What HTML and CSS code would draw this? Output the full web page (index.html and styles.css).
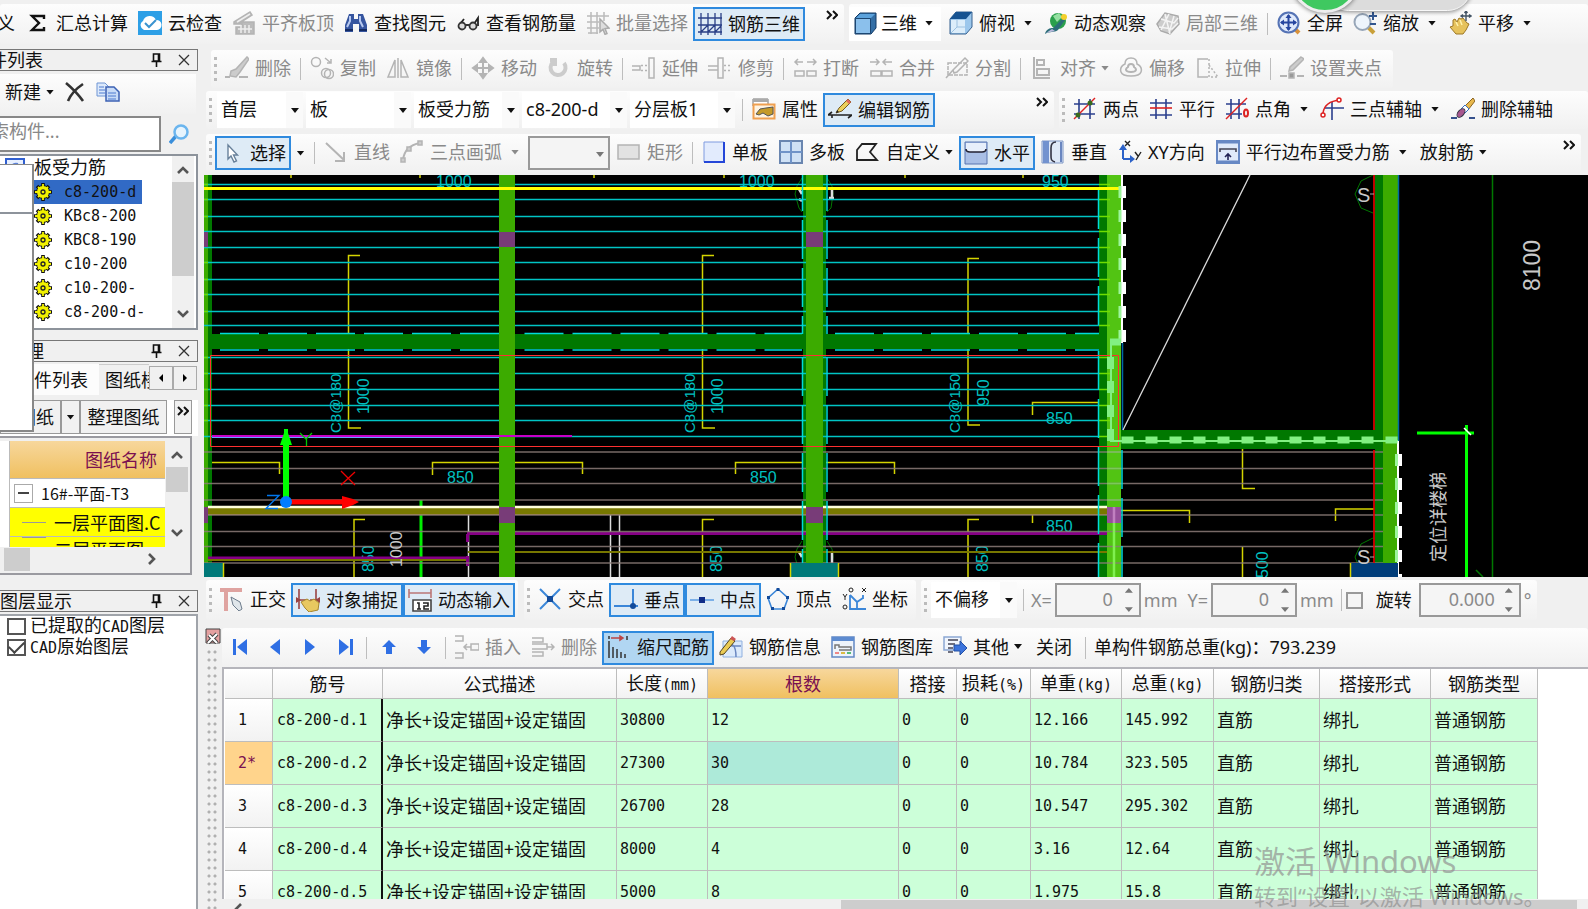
FILE: index.html
```html
<!DOCTYPE html>
<html lang="zh-CN">
<head>
<meta charset="utf-8">
<title>钢筋编辑</title>
<link rel="stylesheet" href="styles.css">
</head>
<body>
<svg class="defs" aria-hidden="true">
  <symbol id="more" viewBox="0 0 12 10"><path d="M1 1l4 4-4 4M7 1l4 4-4 4" fill="none" stroke="#111" stroke-width="2"/></symbol>
  <symbol id="pin" viewBox="0 0 10 14"><path d="M2 1h6v7H2zM0 8.500h10M5 9v5M7 1v7" fill="none" stroke="#111" stroke-width="1.600"/></symbol>
  <symbol id="x" viewBox="0 0 12 12"><path d="M1 1l10 10M11 1L1 11" stroke="#333" stroke-width="1.300"/></symbol>
  <symbol id="up" viewBox="0 0 12 8"><path d="M1 7l5-5 5 5" fill="none" stroke="#555" stroke-width="2.600"/></symbol>
  <symbol id="down" viewBox="0 0 12 8"><path d="M1 1l5 5 5-5" fill="none" stroke="#555" stroke-width="2.600"/></symbol>
  <symbol id="gear" viewBox="0 0 18 18"><path d="M9 0v18M0 9h18M3 3l12 12M15 3L3 15" stroke="#111" stroke-width="3.600"/><circle cx="9" cy="9" r="6.500" fill="#f2f200" stroke="#111"/><path d="M9 1v16M1 9h16M4 4l10 10M14 4L4 14" stroke="#f2f200" stroke-width="1.800"/><circle cx="9" cy="9" r="2" fill="#f2f200" stroke="#222" stroke-width="1.300"/></symbol>
</svg>
<div class="app">
<header class="barrow barrow-top">
  <div class="bar bar-main">
    <button class="tool tool-cut">义</button>
    <button class="tool"><svg class="ico" viewBox="0 0 24 24"><path d="M18 8V5H6l7 7-7 7h12v-3" fill="none" stroke="#111" stroke-width="2.4"/></svg>汇总计算</button>
    <button class="tool"><svg class="ico" viewBox="0 0 24 24"><path d="M0 0h24v24H0z" fill="#2d9fe6"/><path d="M6 19a5 5 0 0 1-1-9 7 7 0 0 1 13-1 5 5 0 0 1 1 10z" fill="#fff"/><path d="M7 12l4 4 7-7" fill="none" stroke="#3a93cf" stroke-width="2"/></svg>云检查</button>
    <button class="tool" disabled><svg class="ico" viewBox="0 0 24 24"><path d="M2 11L18 1l2 3-11 7h13v12H4v-7h6v-3H2z" fill="#bbb"/><path d="M5 11L18 3M6 18h14M9 14v8m4-8v8m4-8v8" stroke="#eee" fill="none"/></svg>平齐板顶</button>
    <button class="tool"><svg class="ico" viewBox="0 0 24 24"><path d="M5 3h5v5h4V3h5l4 11v7h-8v-8H9v8H1v-7z" fill="#36559f"/><path d="M6 5v5l-3 6m13-11v5l3 6" stroke="#b7c9f0" stroke-width="2" fill="none"/><path d="M1 19h8m6 0h8" stroke="#132a63" stroke-width="2"/></svg>查找图元</button>
    <button class="tool"><svg class="ico" viewBox="0 0 24 24"><path d="M4 13l4-5m10 5l4-6v8" stroke="#222" stroke-width="1.800" fill="none"/><circle cx="6" cy="15" r="3.500" fill="#ddd" stroke="#333" stroke-width="1.800"/><circle cx="17" cy="15" r="3.500" fill="#ddd" stroke="#333" stroke-width="1.800"/><path d="M9 14h5" stroke="#333" stroke-width="2"/></svg>查看钢筋量</button>
    <button class="tool" disabled><svg class="ico" viewBox="0 0 24 24"><path d="M5 1v22M11 1v22M18 1v9M1 5h22M1 11h12M1 17h12M2 22h10" stroke="#bbb" stroke-width="1.5"/><path d="M14 8l9 9-4 .5 2 5-2 .8-2-5-3 2.500z" fill="#ddd" stroke="#aaa"/></svg>批量选择</button>
    <button class="tool on"><svg class="ico" viewBox="0 0 24 24"><path d="M3 1v22M10 1v22M17 1v22M0 6h24M0 13h24M0 20h24M3 20L10 13M10 20l7-7M17 20l6-6M23 1v22" stroke="#2a3f86" stroke-width="1.3"/></svg>钢筋三维</button>
    <button class="more" aria-label="更多"><svg><use href="#more"/></svg></button>
  </div>
  <div class="bar bar-view">
    <button class="tool viewcombo"><svg class="ico" viewBox="0 0 24 24"><path d="M1 7l5-5h16v15l-5 6H1z" fill="#336ea5" stroke="#123a66"/><path d="M1.500 7.500h15v15h-15z" fill="#8bc0ec" stroke="#1b4672"/><path d="M2 7l4-4h15l-4 4z" fill="#5ba2dc"/></svg><span>三维</span><i class="caret"></i></button>
    <button class="tool"><svg class="ico" viewBox="0 0 24 24"><path d="M1 8l6-7h16v15l-6 7H1z" fill="#9cc7ec" stroke="#36618f"/><path d="M1 8l6-7h16l-6 7z" fill="#175391"/><path d="M2 9h14v13H2z" fill="#dcedfa"/><path d="M2 22l6-6h8M8 9v7" stroke="#9cc0df" fill="none"/></svg>俯视<i class="caret"></i></button>
    <button class="tool"><svg class="ico" viewBox="0 0 24 24"><circle cx="14" cy="10" r="8" fill="#2aa04c"/><path d="M9 5l6-3 3 4-5 5z" fill="#96e0a2"/><path d="M1 23c1-5 5-6 8-6l9-9 3 1-7 10c-4 3-8 1-13 4z" fill="#2c6e79"/><path d="M2 22l6-4 3 2z" fill="#bbd"/><circle cx="20" cy="6" r="3" fill="#f3cf2b"/></svg>动态观察</button>
    <button class="tool" disabled><svg class="ico" viewBox="0 0 24 24"><path d="M1 13L9 2l13 3 1 8-9 10-9-3z" fill="#ccc" stroke="#aaa"/><path d="M5 8l13 4 4-5M9 3l5 20M3 16l13 2 6-6M13 3L5 19M18 5l-5 17" stroke="#f4f4f4" fill="none" stroke-width="1.500"/></svg>局部三维</button>
    <i class="sep"></i>
    <button class="tool"><svg class="ico" viewBox="0 0 24 24"><path d="M17 17l5 5" stroke="#d9923b" stroke-width="4"/><circle cx="11.500" cy="11.500" r="10" fill="#dfe9fb" stroke="#5573b5" stroke-width="2"/><path d="M11.500 4v15M4 11.500h15" stroke="#2746a0" stroke-width="2"/><path d="M11.500 3l3 4h-6zM11.500 20l3-4h-6zM3 11.500l4-3v6zM20 11.500l-4-3v6z" fill="#2746a0"/></svg>全屏</button>
    <button class="tool"><svg class="ico" viewBox="0 0 24 24"><path d="M15 16l6 6" stroke="#c9a03a" stroke-width="4"/><circle cx="9.500" cy="11" r="8" fill="#eef5fc" stroke="#97a6b8" stroke-width="2"/><path d="M20 1v8M16 5h8M17 13h6" stroke="#345890" stroke-width="2"/></svg>缩放<i class="caret"></i></button>
    <button class="tool"><svg class="ico" viewBox="0 0 24 24"><path d="M2 16l3-1V9l2-1 2 3 2-4 2 1 2-1 4 5 2 1-3 6-3 4H8z" fill="#e6c25c" stroke="#9d7826"/><path d="M8 11l2 4m2-6l2 5" stroke="#fff2ad" stroke-width="1.500"/><path d="M18 0v10M13 5h10M16.500 2L18 0l1.500 2M15 3.500L13 5l2 1.500M21 3.500L23 5l-2 1.500" stroke="#456" fill="none" stroke-width="1.400"/></svg>平移<i class="caret"></i></button>
  </div>
</header>

<div class="body">
<aside class="side">
  <div class="ptitle"><span class="cut">件列表</span><svg class="pin"><use href="#pin"/></svg><svg class="x"><use href="#x"/></svg></div>
  <div class="sidebar-tools"><button class="plain">新建<i class="caret tight"></i></button>
    <button class="plain" aria-label="删除"><svg class="ico20" viewBox="0 0 20 20"><path d="M1 1c6 5 12 11 17 18M18 2C12 6 6 12 3 19" fill="none" stroke="#333" stroke-width="2.600"/></svg></button>
    <button class="plain" aria-label="复制"><svg class="ico24" viewBox="0 0 24 20"><path d="M1 1h8l4 4v9H1z" fill="#dce9fb" stroke="#6f95d4"/><path d="M10 5h8l5 5v9H10z" fill="#c8dbf7" stroke="#3c62b4" stroke-width="1.500"/><path d="M12 11h8m-8 3h8m-8 3h8M3 5h5M3 8h6M3 11h6" stroke="#4c7bd0"/></svg></button>
  </div>
  <div class="search"><input type="text" class="sinput" aria-label="搜索构件" placeholder="索构件..."><button class="plain" aria-label="搜索"><svg class="ico20" viewBox="0 0 20 20"><path d="M7 12l-6 7" stroke="#3a8fdb" stroke-width="3.500"/><circle cx="12" cy="8" r="6.500" fill="#e7f4fd" stroke="#6bb5ee" stroke-width="2.500"/></svg></button></div>
  <div class="treebox">
    <ul class="tree">
      <li class="root"><svg class="rooticon" viewBox="0 0 20 20"><path d="M1 1h18v18H1z" fill="#e8f0ff" stroke="#2f5fd0" stroke-width="2"/><path d="M13 6c-4-1-6 1-6 3v8" fill="none" stroke="#5c82d8" stroke-width="2"/></svg>板受力筋</li>
      <li class="sel"><svg class="gear"><use href="#gear"/></svg>c8-200-d</li>
      <li><svg class="gear"><use href="#gear"/></svg>KBc8-200</li>
      <li><svg class="gear"><use href="#gear"/></svg>KBC8-190</li>
      <li><svg class="gear"><use href="#gear"/></svg>c10-200</li>
      <li><svg class="gear"><use href="#gear"/></svg>c10-200-</li>
      <li><svg class="gear"><use href="#gear"/></svg>c8-200-d-</li>
    </ul>
    <div class="vscroll"><svg class="chev"><use href="#up"/></svg><i class="thumb thumb-tree"></i><svg class="chev"><use href="#down"/></svg></div>
  </div>
  <div class="ptitle ptitle-mgr"><span class="behind">理</span><svg class="pin"><use href="#pin"/></svg><svg class="x"><use href="#x"/></svg></div>
  <div class="tabs"><button class="tab tab-on">件列表</button><button class="tab tab-off">图纸楼</button><button class="tabarrow" aria-label="左"><svg viewBox="0 0 6 8"><path d="M5 0v8L1 4z"/></svg></button><button class="tabarrow" aria-label="右"><svg viewBox="0 0 6 8"><path d="M1 0v8l4-4z"/></svg></button></div>
  <div class="sheettools"><button class="flat flat-first">图纸</button><button class="flat flat-drop" aria-label="图纸选项"><i class="caret bare"></i></button><button class="flat flat-wide">整理图纸</button><button class="flat flat-more" aria-label="更多"><svg><use href="#more"/></svg></button></div>
  <div class="sheets">
    <div class="sheetrow">
      <div class="sheetlist">
        <div class="sh sh-head">图纸名称</div>
        <div class="sh sh-group"><button class="minus" aria-label="折叠"></button>16#-平面-T3</div>
        <div class="sh sh-yellow"><i class="branch"></i>一层平面图.C</div>
        <div class="sh sh-yellow sh-part"><i class="branch"></i>二层平面图</div>
      </div>
      <div class="vscroll"><svg class="chev"><use href="#up"/></svg><i class="thumb thumb-sheet"></i><svg class="chev"><use href="#down"/></svg></div>
    </div>
    <div class="hscroll"><i class="hthumb"></i><svg class="chevr" viewBox="0 0 8 12"><path d="M1 1l5 5-5 5" fill="none" stroke="#555" stroke-width="2.600"/></svg></div>
  </div>
  <div class="ptitle ptitle-layer"><span>图层显示</span><svg class="pin"><use href="#pin"/></svg><svg class="x"><use href="#x"/></svg></div>
  <div class="layers">
    <label><input type="checkbox"><span>已提取的<b>CAD</b>图层</span></label>
    <label><input type="checkbox" checked><span><b>CAD</b>原始图层</span></label>
  </div>
  <div class="floatwin"><div class="floatinner"></div></div>
</aside>

<main class="main">
  <div class="bar bar-edit">
    <i class="grip"></i>
    <button class="tool" disabled><svg class="ico" viewBox="0 0 24 24"><path d="M22 1L11 13l-5 2-1 5 6 1 4-5L24 3z" fill="#ccc"/><path d="M0 21h5m9 0h9" stroke-width="2"/></svg>删除</button>
    <i class="sep"></i>
    <button class="tool" disabled><svg class="ico" viewBox="0 0 24 24"><circle cx="6" cy="6" r="4.500"/><circle cx="16" cy="17" r="4.500"/><circle cx="19" cy="18" r="4.500"/><path d="M15 2l6 5m0-4v4h-4"/></svg>复制</button>
    <button class="tool" disabled><svg class="ico" viewBox="0 0 24 24"><path d="M9 4v17H2zM15 4v17h7zM12 2v20"/></svg>镜像</button>
    <i class="sep"></i>
    <button class="tool" disabled><svg class="ico" viewBox="0 0 24 24"><path d="M12 3v18M3 12h18M9 6l3-4 3 4zM9 18l3 4 3-4zM6 9l-4 3 4 3zM18 9l4 3-4 3z" stroke-width="2"/></svg>移动</button>
    <button class="tool" disabled><svg class="ico" viewBox="0 0 24 24"><path d="M6 6a7.500 7.500 0 1 0 11 1M3 4l5 0v6" stroke="#ccc" stroke-width="4"/></svg>旋转</button>
    <i class="sep"></i>
    <button class="tool" disabled><svg class="ico" viewBox="0 0 24 24"><path d="M0 10h8v4H0M17 2h5v20h-5z"/><path d="M9 9.500h7M9 14.500h7" stroke-dasharray="2 2"/></svg>延伸</button>
    <button class="tool" disabled><svg class="ico" viewBox="0 0 24 24"><path d="M0 10h10v4H0M10 2h5v20h-5z"/><path d="M16 9.500h7M16 14.500h7" stroke-dasharray="2 2"/></svg>修剪</button>
    <i class="sep"></i>
    <button class="tool" disabled><svg class="ico" viewBox="0 0 24 24"><path d="M2 15h9v5H2zM14 15h9v5h-9zM2 6h8M5 3L2 6l3 3M14 6h9M20 3l3 3-3 3"/></svg>打断</button>
    <button class="tool" disabled><svg class="ico" viewBox="0 0 24 24"><path d="M2 15h10v5H2zM13 15h10v5H13zM1 6h9M7 3l3 3-3 3M14 6h9M17 3l-3 3 3 3"/></svg>合并</button>
    <button class="tool" disabled><svg class="ico" viewBox="0 0 24 24"><path d="M3 7h19v12H3z" stroke-dasharray="4 1"/><path d="M1 22L8 14M8 14L20 2l3 3-11 11-3 1z"/></svg>分割</button>
    <i class="sep"></i>
    <button class="tool" disabled><svg class="ico" viewBox="0 0 24 24"><path d="M4 1v22M4 22h16M7 4h7v5H7zM7 13h12v6H7z" stroke-width="2"/></svg>对齐<i class="caret tight"></i></button>
    <button class="tool" disabled><svg class="ico" viewBox="0 0 24 24"><path d="M12 2c5 0 6 3 6 6 4 2 5 5 4 8s-4 4-10 4-9-1-10-4 0-6 4-8c0-3 1-6 6-6z"/><path d="M12 8c2 0 3 1 3 3 3 2 3 5-3 5s-6-3-3-5c0-2 1-3 3-3z" stroke-width="2"/></svg>偏移</button>
    <button class="tool" disabled><svg class="ico" viewBox="0 0 24 24"><path d="M13 3H3v18h10"/><path d="M14 3v18M14 9l9 12H14" stroke-dasharray="2 2"/></svg>拉伸</button>
    <i class="sep"></i>
    <button class="tool" disabled><svg class="ico" viewBox="0 0 24 24"><path d="M21 1l3 2L13 14l-4 1 1-4z" fill="#ccc"/><path d="M0 20h7m10 0h7" stroke-width="2"/><path d="M9 17h5v5H9z" fill="#999"/></svg>设置夹点</button>
  </div>

  <div class="barrow">
    <div class="bar bar-levels">
      <i class="grip"></i>
      <div class="combos">
        <label class="combo combo-s"><select aria-label="楼层"><option>首层</option></select></label>
        <label class="combo"><select aria-label="类型"><option>板</option></select></label>
        <label class="combo"><select aria-label="构件"><option>板受力筋</option></select></label>
        <label class="combo"><select aria-label="名称"><option>c8-200-d</option></select></label>
        <label class="combo"><select aria-label="分层"><option>分层板1</option></select></label>
      </div>
      <i class="sep"></i>
      <button class="tool"><svg class="ico" viewBox="0 0 24 24"><path d="M1 2h15v7H1z" fill="#fff" stroke="#777"/><path d="M1 2h15v3H1z" fill="#aaa"/><path d="M1.500 7.500h21v14h-21z" fill="#fff4e2" stroke="#f0a050" stroke-width="2"/><path d="M4 17l4-5 6-1 7-1v7l-5 2-5-3-4 2z" fill="#c59a28" stroke="#555"/></svg>属性</button>
      <button class="tool on"><svg class="ico" viewBox="0 0 24 24"><path d="M0 17h24M0 17l4-3M24 17l-4 3M4 17v3" stroke="#222" stroke-width="1.600" fill="none"/><path d="M8 15l3-5L20 1l3 3-9 9z" fill="#ecd05c" stroke="#765a1e"/><path d="M18 3l2-2 3 3-2 2z" fill="#e26a5c"/><path d="M8 15l1-3 2 2z" fill="#222"/></svg>编辑钢筋</button>
      <button class="more" aria-label="更多"><svg><use href="#more"/></svg></button>
    </div>
    <div class="bar bar-axis">
      <i class="grip"></i>
      <button class="tool"><svg class="ico" viewBox="0 0 24 24"><path d="M6 2v20M17 2v20M1 7h21M1 17h21" stroke="#2b3f8d" stroke-width="1.600"/><path d="M1 22L22 1" stroke="#d22" stroke-width="1.500"/><circle cx="5" cy="18" r="2.500" fill="#396a1d"/><circle cx="17" cy="6" r="2.500" fill="#396a1d"/></svg>两点</button>
      <button class="tool"><svg class="ico" viewBox="0 0 24 24"><path d="M7 2v20M17 2v20M1 6h22M1 18h22" stroke="#2b3f8d" stroke-width="1.600"/><path d="M1 11h22" stroke="#d22" stroke-width="1.600"/></svg>平行</button>
      <button class="tool"><svg class="ico" viewBox="0 0 24 24"><path d="M6 2v20M14 2v20M1 7h20M1 17h16" stroke="#2b3f8d" stroke-width="1.600"/><path d="M1 22L22 1" stroke="#d22" stroke-width="1.500"/><ellipse cx="21" cy="16" rx="2" ry="3.500" fill="none" stroke="#d22" stroke-width="2"/></svg>点角<i class="caret"></i></button>
      <button class="tool"><svg class="ico" viewBox="0 0 24 24"><path d="M12 5v18M5 11h19" stroke="#2b3f8d" stroke-width="1.600"/><path d="M3 16C4 8 9 4 20 3" stroke="#d22" stroke-width="1.500" fill="none"/><circle cx="3" cy="18" r="2" fill="#fff" stroke="#d22" stroke-width="1.500"/><circle cx="19" cy="3" r="2" fill="#fff" stroke="#d22" stroke-width="1.500"/></svg>三点辅轴<i class="caret"></i></button>
      <button class="tool"><svg class="ico" viewBox="0 0 24 24"><path d="M0 21h6m12 0h6" stroke="#35508c" stroke-width="2"/><path d="M14 9l8-8 2 3-7 9z" fill="#e8b84c" stroke="#8a6320"/><path d="M10 12l4-4 4 4-4 4z" fill="#fff" stroke="#3a6ec0"/><ellipse cx="10" cy="16" rx="3" ry="5" transform="rotate(40 10 16)" fill="#a8578f" stroke="#334"/></svg>删除辅轴</button>
    </div>
  </div>

  <div class="barrow">
    <div class="bar bar-draw">
      <i class="grip"></i>
      <button class="tool on"><svg class="ico" viewBox="0 0 24 24"><path d="M8 4v14l3-3 3 6 2.500-1-3-6h4z" fill="#fff" stroke="#68819a" stroke-width="1.400"/></svg>选择</button><button class="drop" aria-label="选择方式"><i class="caret bare"></i></button>
      <i class="sep"></i>
      <button class="tool" disabled><svg class="ico" viewBox="0 0 24 24"><path d="M2 3l18 17M20 12v9h-9" stroke-width="2"/></svg>直线</button>
      <button class="tool" disabled><svg class="ico" viewBox="0 0 24 24"><path d="M3 20C4 11 9 5 20 3" stroke-width="2"/><path d="M1 18h4v4H1zM7 7h4v4H7zM18 1h4v4h-4z" fill="#ccc"/></svg>三点画弧<i class="caret"></i></button>
      <label class="combo combo-line"><select disabled aria-label="画法"><option></option></select></label>
      <button class="tool" disabled><svg class="ico" viewBox="0 0 24 24"><path d="M1 5h21v14H1z" fill="#e2e2e2"/></svg>矩形</button>
      <i class="sep"></i>
      <button class="tool"><svg class="ico" viewBox="0 0 24 24"><path d="M2 2h20v20H2z" fill="#e2ebfd" stroke="#7f9be0"/><path d="M2 22h20V2" fill="none" stroke="#2446d8" stroke-width="2"/></svg>单板</button>
      <button class="tool"><svg class="ico" viewBox="0 0 24 24"><path d="M1 1h22v22H1z" fill="#cfe1f5" stroke="#6a86b0" stroke-width="2"/><path d="M12 1v22M1 12h22" stroke="#6f93c8" stroke-width="2"/></svg>多板</button>
      <button class="tool"><svg class="ico" viewBox="0 0 24 24"><path d="M6 4h14l-6 8 7 8H1V10z" fill="none" stroke="#222" stroke-width="1.800"/></svg>自定义<i class="caret tight"></i></button>
      <button class="tool on"><svg class="ico" viewBox="0 0 24 24"><path d="M1 1h22v22H1z" fill="#a9bfe6" stroke="#5875b0"/><path d="M2 2h20v9H2z" fill="#e7effb"/><path d="M2 8c0 3 2 3 4 3h12c2 0 4 0 4-3" fill="none" stroke="#223" stroke-width="1.600"/></svg>水平</button>
      <button class="tool"><svg class="ico" viewBox="0 0 24 24"><path d="M1 1h21v22H1z" fill="#dfe9f8" stroke="#7d95c4"/><path d="M2 1h6v22H2z" fill="#7292cf"/><path d="M15 2c-4 0-5 3-5 6v8c0 3 0 5 4 6" fill="none" stroke="#334" stroke-width="1.600"/><path d="M20 2v20" stroke="#6a86c0" stroke-width="2"/></svg>垂直</button>
      <button class="tool"><svg class="ico" viewBox="0 0 24 24"><path d="M5 6v13M5 19h9" stroke="#2c62c8" stroke-width="2"/><path d="M1 10l4-6 4 6zM12 15l5 4-5 4z" fill="#2c62c8"/><path d="M7 1l5 5m0-5L7 6M17 12l3 4m3-4l-5 8" stroke="#222" stroke-width="1.400"/></svg>XY方向</button>
      <button class="tool"><svg class="ico" viewBox="0 0 24 24"><path d="M1 1h22v22H1z" fill="#dfe9fa" stroke="#6788c4" stroke-width="2"/><path d="M1 2h22M1 22h22" stroke="#6788c4" stroke-width="3"/><path d="M4 12V9h16v3" fill="none" stroke="#445" stroke-width="1.600"/><path d="M12 20v-5M9 17l3-3 3 3" stroke="#225" stroke-width="1.600" fill="none"/></svg>平行边布置受力筋<i class="caret"></i></button>
      <button class="tool">放射筋<i class="caret tight"></i></button>
      <button class="more" aria-label="更多"><svg><use href="#more"/></svg></button>
    </div>
  </div>

  <svg class="canvas" viewBox="204 175 1384 402" preserveAspectRatio="xMinYMin slice" role="img" aria-label="板受力筋平面图">
    <path d="M204 175h1384v402H204z" fill="#000"/>
    <g stroke="#d4d400" stroke-width="1.500" fill="none">
      <path d="M291 175v3M420 175v3M594 175v3M724 175v3M905 175v3M1023 175v3"/>
      <path d="M360 255.500h-11.500V428H361M714 255.500h-11.500V428H715M979 258.500h-11V425h12M365 519.500h-11V578M714 519.500h-11.500V578M979 519.500h-11V578"/>
      <path d="M212 462.500h67.500V474M432.500 475v-12.500h150V474M735.500 474v-11.500h159V474M1032.500 415v-12.500H1099M1032.500 515v8M1121 510.500h68.500V523M1335.500 521v-12H1374M1242.500 449v39.500H1255M1242.500 547v30"/>
    </g>
    <g stroke="#dcdcdc" stroke-width="1.500"><path d="M468.500 515v62M610.500 515v62M619.500 515v62"/></g>
    <path d="M421 500v77" stroke="#0e0" stroke-width="3"/>
    <g class="cad-cyan">
      <text x="436" y="187">1000</text><text x="739" y="187">1000</text><text x="1042" y="187">950</text>
      <text x="447" y="483">850</text><text x="750" y="483">850</text><text x="1046" y="424">850</text><text x="1046" y="532">850</text>
      <text class="narrow" transform="translate(341 433) rotate(-90)">C8@180</text><text class="narrow" transform="translate(695 433) rotate(-90)">C8@180</text><text class="narrow" transform="translate(960 433) rotate(-90)">C8@150</text>
      <text transform="translate(369 414) rotate(-90)">1000</text><text transform="translate(723 414) rotate(-90)">1000</text><text transform="translate(989 406) rotate(-90)">950</text>
      <text transform="translate(374 572) rotate(-90)">850</text><text transform="translate(722 572) rotate(-90)">850</text><text transform="translate(988 572) rotate(-90)">850</text><text transform="translate(1268 578) rotate(-90)">500</text>
    </g>
    <g fill="none" stroke="#070"><path d="M802 178l-5 8-2 8 4 14 3 4M827 178l5 8 1 8-2 14-4 4M802 541l-5 8-2 8 4 14M827 541l5 8 1 8-2 14"/><path d="M1373 175l-12 6-6 13 6 14 12 5M1373 538l-12 6-6 13 4 10"/></g>
    <path d="M799 189l3 5M799 199l3 2M832 187v12M829 198h5M799 552l3 5M832 551v12" stroke="#ddd" stroke-width="2.500"/>
    <g fill="#007800"><path d="M204 334h903v15H204zM208 175h4v388h-4zM803 175h23v388h-23zM1099 175h8v402h-8zM1121 430h262v19h-262zM1375 175h8v388h-8z"/></g>
    <path d="M204 508h903v7H204z" fill="#787800"/><path d="M204 514.500h903" stroke="#aa8b20"/>
    <path d="M208 558h259M467.500 566v-10M467.500 542v-8M467 533.500h640" stroke="#850085" stroke-width="3" fill="none"/>
    <path d="M208 560h258M468 552h639" stroke="#777700" stroke-width="2"/>
    <path d="M204 507h909" stroke="#ffd" stroke-width="2.500"/>
    <path d="M204 175h4v388h-4z" fill="#3cab00"/>
    <path d="M1107 175h14v402h-14z" fill="#52c413"/>
    <path d="M204 184.500h895M204 199.500h895M204 216.500h895M204 231.500h895M204 247.500h895M204 262.500h895M204 279.500h895M204 294.500h895M204 311.500h895M204 325.500h895M204 357.500h895M204 373.500h895M204 389.500h895M204 405.500h895M204 420.500h895M204 436.500h895" stroke="#00c4c4" stroke-width="1.400"/>
    <path d="M1099 184.500h11M1099 199.500h11M1099 216.500h11M1099 231.500h11M1099 247.500h11M1099 262.500h11M1099 279.500h11M1099 294.500h11M1099 311.500h11M1099 325.500h11M1099 357.500h11M1099 373.500h11M1099 389.500h11M1099 405.500h11M1099 420.500h11M1099 436.500h11M204 184.500h4M204 199.500h4M204 216.500h4M204 262.500h4M204 279.500h4M204 294.500h4M204 311.500h4M204 357.500h4M204 373.500h4M204 389.500h4M204 405.500h4M204 420.500h4" stroke="#70dc00" stroke-width="1.500"/>
    <path d="M204 452h1182M204 468.500h1182M204 483.500h1182M204 500h1182M204 515h1182M204 531.500h1182M204 546.500h1182M204 563h1182" stroke="#8c7c78" stroke-width="1.500" opacity=".85"/>
    <path d="M204 188.500h917" stroke="#ff0" stroke-width="3"/>
    <path d="M499 175h16v402h-16zM806 175h17v388h-17z" fill="#3cab00"/>
    <path d="M1107 452h14M1107 468.500h14M1107 483.500h14M1107 500h14M1383 452h4M1383 468.500h4M1383 483.500h4" stroke="#7cc85c" stroke-width="1.500"/>
    <path d="M1383 175h15v388h-15z" fill="#3cab00"/>
    <path d="M499 188.500h16M806 188.500h17" stroke="#ff0" stroke-width="3"/>
    <g stroke="#00dada" stroke-width="1.500"><path d="M220 333.500h279M220 350h279M524.500 333.500H802M524.500 350H802M835 333.500h264M835 350h264" stroke-dasharray="39 9"/><path d="M802.500 220v114M827 220v114M802.500 175v36M827 175v36M802.500 357v206M827 357v206M1098.500 190v144M1098.500 351v226M1122 450v127" stroke-dasharray="39 9"/></g>
    <path d="M1122.500 343v87M1398.500 175v266" stroke="#0068a8" stroke-width="1.500"/>
    <path d="M1374 175v255M1374 450v113" stroke="#e00" stroke-width="1.600"/>
    <path d="M204 232h4v15h-4zM499 232h16v15h-16zM806 232h17v15h-17zM204 507h4v16h-4zM499 507h16v16h-16zM806 507h17v16h-17z" fill="#783c78"/><path d="M1107 507h14v16h-14z" fill="#96509a"/>
    <path d="M1114 523v54" stroke="#80f050" stroke-width="2.500"/><path d="M1114 507v16" stroke="#c080c0" stroke-width="2.500"/>
    <path d="M212 436h360" stroke="#c800c8" stroke-width="2"/><path d="M212 437.500h287" stroke="#6aa0ff"/>
    <path d="M210.500 355.500h908v91h-908z" fill="none" stroke="#ff3030"/>
    <path d="M1121.500 342h-10.500v99h287" fill="none" stroke="#82f082" stroke-width="2"/>
    <path d="M1122 175v168M1398 441v136" stroke="#fff" stroke-width="2"/>
    <path d="M1124 186v157M1400 454v123" stroke="#fff" stroke-width="4" stroke-dasharray="12 12"/>
    <path d="M1120 186v157M1396.500 454v123" stroke="#9df59d" stroke-width="3" stroke-dasharray="12 12"/>
    <path d="M1110 342h11M1110.500 357v84M1121.500 440h277" stroke="#82f082" stroke-width="7" stroke-dasharray="12 12"/>
    <path d="M1123 430L1250 175" stroke="#ddd" stroke-width="1.300"/>
    <path d="M204 563h19v14h-19zM791 563h47v14h-47z" fill="#007878"/><path d="M1351 563h47v14h-47z" fill="#003c78"/>
    <path d="M223.500 563v14M790.500 563v14M838.500 563v14M1350.500 563v14" stroke="#d4d400" stroke-width="1.500"/>
    <path d="M1492.500 175v402M1476 570l7 7" stroke="#007800" stroke-width="1.500"/>
    <path d="M1417 433h57M1466.500 425v152" stroke="#0f0" stroke-width="3"/><path d="M1464 428l7 7" stroke="#fff" stroke-width="1.500"/>
    <g class="cad-gray">
      <text x="1357" y="202" font-size="20">S</text><text x="1357" y="564" font-size="20">S</text><path d="M1370 194h4M1370 557h4" stroke="#aaa"/>
      <text transform="translate(402 567) rotate(-90)" font-size="16">1000</text>
      <text transform="translate(1540 291) rotate(-90)" font-size="23">8100</text>
      <text transform="translate(1445 562) rotate(-90)" font-size="18">定位详楼梯</text>
    </g>
    <path d="M286 437v62" stroke="#0f0" stroke-width="6"/><path d="M284 429h4v4l4 12h-12l4-12z" fill="#0f0"/>
    <path d="M300 433l6 6 6-6M306.500 439v7" stroke="#0c0" fill="none" stroke-width="1.300"/>
    <path d="M290 502h54" stroke="red" stroke-width="5"/><path d="M342 496l11 3 6 3-6 3-11 4z" fill="red"/>
    <path d="M341 471l14 14M355 472l-14 13" stroke="#e00" stroke-width="1.300"/>
    <circle cx="286" cy="502" r="6" fill="#007dff"/><path d="M267 495.500h12l-13 13h12" fill="none" stroke="#07e" stroke-width="1.400"/>
  </svg>

  <div class="barrow barrow-snap">
    <div class="bar bar-snap1">
      <i class="grip"></i>
      <button class="tool"><svg class="ico" viewBox="0 0 24 24"><path d="M0 3h22M6 1v23" stroke="#dfa3a0" stroke-width="4"/><path d="M11 10l9 5 2 7-3 2-6-6z" fill="#e0e6ea" stroke="#6d7c8c"/></svg>正交</button>
      <button class="tool on"><svg class="ico" viewBox="0 0 24 24"><path d="M3 1v20M20 1v18M0 12h10M14 12h10" stroke="#944" stroke-width="1.600"/><path d="M0 9l5 3-5 3zM24 9l-5 3 5 3z" fill="#944"/><path d="M5 14l6-3 3 2 4-2 5 4-1 7-9 2-4-4z" fill="#e8c860" stroke="#a8862c"/></svg>对象捕捉</button>
      <button class="tool on"><svg class="ico" viewBox="0 0 24 24"><path d="M1 1v9M23 1v9M1 5h22" stroke="#b77" stroke-width="1.600"/><path d="M5 12h18v11H5z" fill="#fff" stroke="#444" stroke-width="1.600"/><path d="M9 15h2v6m-2 0h4M15 15h5v3h-4v3h5" fill="none" stroke="#222" stroke-width="1.600"/></svg>动态输入</button>
    </div>
    <div class="bar bar-snap2">
      <i class="grip"></i>
      <button class="tool"><svg class="ico" viewBox="0 0 24 24"><path d="M2 2l20 20M22 2L2 22" stroke="#3b86d8" stroke-width="2"/><path d="M9 9h6v6H9z" fill="#124b9b"/></svg>交点</button>
      <button class="tool on"><svg class="ico" viewBox="0 0 24 24"><path d="M0 18h24M19 1v17" stroke="#3b86d8" stroke-width="2"/><circle cx="19" cy="18" r="3" fill="#124b9b"/></svg>垂点</button>
      <button class="tool on"><svg class="ico" viewBox="0 0 24 24"><path d="M0 12h24" stroke="#7cb0e8" stroke-width="2"/><path d="M9 9h6v6H9z" fill="#112d88"/></svg>中点</button>
      <button class="tool"><svg class="ico" viewBox="0 0 24 24"><path d="M12 2l10 9-4 11H6L2 11z" fill="none" stroke="#3b86d8" stroke-width="1.600"/><path d="M10.500 1h3v3h-3zM20 9h3v3h-3zM1 9h3v3H1zM5 20h3v3H5zM16 20h3v3h-3z" fill="#124b9b"/></svg>顶点</button>
      <button class="tool"><svg class="ico" viewBox="0 0 24 24"><path d="M8 8v14h16M8 8l7 7 6-4M15 15v7M21 8v4" fill="none" stroke="#3b86d8" stroke-width="1.800"/><path d="M20 1l4 4m0-4l-4 4M1 7l2 3 2-3M3 10v3" stroke="#222" fill="none"/><circle cx="9" cy="3" r="2" fill="none" stroke="#222"/><circle cx="3" cy="20" r="2" fill="none" stroke="#222"/></svg>坐标</button>
    </div>
    <div class="bar bar-offset">
      <i class="grip"></i>
      <label class="combo combo-s"><select aria-label="偏移方式"><option>不偏移</option></select></label>
      <i class="sep"></i>
      <label class="dim" for="ox">X=</label><span class="spin"><input id="ox" type="text" value="0" disabled><i class="ud"></i></span><span class="dim">mm</span>
      <label class="dim dim-y" for="oy">Y=</label><span class="spin"><input id="oy" type="text" value="0" disabled><i class="ud"></i></span><span class="dim">mm</span>
      <i class="sep"></i>
      <label class="rot"><input type="checkbox" disabled>旋转</label><span class="spin spin-wide"><input type="text" value="0.000" disabled aria-label="角度"><i class="ud"></i></span><span class="dim">°</span>
    </div>
  </div>

  <section class="editor">
    <div class="strip"><button class="plain" aria-label="关闭面板"><svg class="ico16" viewBox="0 0 16 16"><path d="M1 1h14v14H1z" fill="#e4a0a0" stroke="#444"/><path d="M4 7l8 8M12 6l-9 9" stroke="#444" stroke-width="4"/><path d="M4 7l8 8M12 6l-9 9" stroke="#fff" stroke-width="2"/></svg></button><i class="dots"></i></div>
    <div class="edmain">
      <div class="bar bar-nav">
        <button class="nav" aria-label="首条"><svg class="ico20" viewBox="0 0 20 20"><path d="M3 2h3v16H3zM17 2v16L7 10z" fill="#2f6fe4"/></svg></button>
        <button class="nav" aria-label="上一条"><svg class="ico20" viewBox="0 0 20 20"><path d="M15 2v16L5 10z" fill="#2f6fe4"/></svg></button>
        <button class="nav" aria-label="下一条"><svg class="ico20" viewBox="0 0 20 20"><path d="M5 2v16l10-8z" fill="#2f6fe4"/></svg></button>
        <button class="nav" aria-label="末条"><svg class="ico20" viewBox="0 0 20 20"><path d="M15 2h3v16h-3zM4 2v16l10-8z" fill="#2f6fe4"/></svg></button>
        <i class="sep"></i>
        <button class="nav" aria-label="上移"><svg class="ico20" viewBox="0 0 20 20"><path d="M10 3l7 7h-4v7H7v-7H3z" fill="#2f6fe4"/></svg></button>
        <button class="nav" aria-label="下移"><svg class="ico20" viewBox="0 0 20 20"><path d="M10 17l7-7h-4V3H7v7H3z" fill="#2f6fe4"/></svg></button>
        <i class="sep"></i>
        <button class="tool" disabled><svg class="ico" viewBox="0 0 24 24"><path d="M0 1h8v5H0M0 18h8v5H0M10 12h6M12 9l-3 3 3 3M16 9h8v6h-8z"/></svg>插入</button>
        <button class="tool" disabled><svg class="ico" viewBox="0 0 24 24"><path d="M1 3h11v4H1M1 9h15v5H1M1 17h11v4H1M16 12h7M20 9l3 3-3 3"/></svg>删除</button>
        <button class="tool on strong"><svg class="ico" viewBox="0 0 24 24"><path d="M2 1v3m0 2v17M6 12v11M10 14v9M14 17v6M18 19v4M20 1v4" stroke="#333" stroke-width="1.500"/><path d="M4 3h10M13 1l3 2-3 2z" stroke="#b44" fill="#b44" stroke-width="1.500"/></svg>缩尺配筋</button>
        <button class="tool"><svg class="ico" viewBox="0 0 24 24"><path d="M4 6h19v16H4z" fill="#dceafb" stroke="#8fb0e0"/><path d="M5 12c8-6 12-2 12 10M13 6v5h9" fill="none" stroke="#6a87c0" stroke-width="1.500"/><path d="M1 17L12 3l4 3L5 19l-4 1z" fill="#eacb55" stroke="#54441f"/><path d="M11 4l2-3 4 3-2 2z" fill="#c55"/></svg>钢筋信息</button>
        <button class="tool"><svg class="ico" viewBox="0 0 24 24"><path d="M1 2h22v20H1z" fill="#edf3fb" stroke="#6288c4" stroke-width="1.500"/><path d="M1 2h22v4H1z" fill="#5d8bd0"/><path d="M4 14v-4h4v2h12v3H8" fill="none" stroke="#777" stroke-width="1.500"/><path d="M4 18h4" stroke="#e88" stroke-width="2"/><path d="M10 18h4" stroke="#db4" stroke-width="2"/><path d="M16 18h4" stroke="#5b7" stroke-width="2"/></svg>钢筋图库</button>
        <button class="tool"><svg class="ico" viewBox="0 0 24 24"><path d="M1 2h17v13H1z" fill="#f1f6fd" stroke="#8ca8d4" stroke-width="1.500"/><path d="M5 5h10M5 9h7M5 13h5M5 17h5" stroke="#445" stroke-width="1.500"/><path d="M11 10h6V6l7 7-7 7v-4h-6z" fill="#3c74dc" stroke="#2350a4"/></svg>其他<i class="caret tight"></i></button>
        <button class="tool tool-close">关闭</button>
        <i class="sep"></i>
        <span class="total">单构件钢筋总重(kg)：793.239</span>
      </div>
      <div class="gridwrap">
        <table class="grid">
          <colgroup><col class="c0"><col class="c1"><col class="c2"><col class="c3"><col class="c4"><col class="c5"><col class="c6"><col class="c7"><col class="c8"><col class="c9"><col class="c10"><col class="c11"></colgroup>
          <thead><tr><th></th><th>筋号</th><th>公式描述</th><th>长度<b>(mm)</b></th><th class="hot">根数</th><th>搭接</th><th>损耗<b>(%)</b></th><th>单重<b>(kg)</b></th><th>总重<b>(kg)</b></th><th>钢筋归类</th><th>搭接形式</th><th>钢筋类型</th></tr></thead>
          <tbody>
            <tr><th>1</th><td>c8-200-d.1</td><td class="z">净长+设定锚固+设定锚固</td><td>30800</td><td>12</td><td>0</td><td>0</td><td>12.166</td><td>145.992</td><td class="z">直筋</td><td class="z">绑扎</td><td class="z">普通钢筋</td></tr>
            <tr><th class="cur">2*</th><td>c8-200-d.2</td><td class="z">净长+设定锚固+设定锚固</td><td>27300</td><td class="act">30</td><td>0</td><td>0</td><td>10.784</td><td>323.505</td><td class="z">直筋</td><td class="z">绑扎</td><td class="z">普通钢筋</td></tr>
            <tr><th>3</th><td>c8-200-d.3</td><td class="z">净长+设定锚固+设定锚固</td><td>26700</td><td>28</td><td>0</td><td>0</td><td>10.547</td><td>295.302</td><td class="z">直筋</td><td class="z">绑扎</td><td class="z">普通钢筋</td></tr>
            <tr><th>4</th><td>c8-200-d.4</td><td class="z">净长+设定锚固+设定锚固</td><td>8000</td><td>4</td><td>0</td><td>0</td><td>3.16</td><td>12.64</td><td class="z">直筋</td><td class="z">绑扎</td><td class="z">普通钢筋</td></tr>
            <tr><th>5</th><td>c8-200-d.5</td><td class="z">净长+设定锚固+设定锚固</td><td>5000</td><td>8</td><td>0</td><td>0</td><td>1.975</td><td>15.8</td><td class="z">直筋</td><td class="z">绑扎</td><td class="z">普通钢筋</td></tr>
          </tbody>
        </table>
      </div>
      <div class="gridscroll"><svg class="gl" viewBox="0 0 8 12"><path d="M7 1L2 6l5 5" fill="none" stroke="#555" stroke-width="2.600"/></svg><i></i></div>
    </div>
  </section>
</main>
</div>
<div class="widget"><i class="pill"></i><i class="ball"></i></div>
<div class="watermark"><div class="wm1">激活 Windows</div><div class="wm2">转到“设置”以激活 Windows。</div></div>
</div>
</body>
</html>
```
FILE: styles.css
```css
*{box-sizing:border-box}
html,body{height:100%}
body{margin:0;background:#f0f0f0;color:#111;font:18px/24px "Noto Sans","Noto Sans CJK SC",sans-serif;overflow:hidden}
button,input,select{font:inherit;color:inherit;margin:0}
button{background:none;border:0;padding:0}
i{font-style:normal}
.defs{position:absolute;width:0;height:0}
.app{position:relative;height:100vh;display:flex;flex-direction:column;overflow:hidden}
.body{flex:1;min-height:0;display:flex;gap:6px}

/* toolbars */
.barrow{display:flex;gap:5px;flex:none;white-space:nowrap}
.barrow-top{padding-top:4px;height:48px}
.bar{display:flex;align-items:center;flex:none;height:40px;background:linear-gradient(#fdfdfd,#f1f1f1);border-radius:3px;white-space:nowrap}
.bar-main{width:844px}
.bar-view{flex:1}
.bar-edit{height:38px;align-self:flex-start;margin:2px 0 3px 7px;padding:0 6px 0 3px}
.bar-levels{height:38px;margin-left:2px;padding-left:3px;width:848px}
.bar-axis{height:38px;flex:1;padding-left:3px}
.bar-draw{height:38px;margin:5px 0 3px 2px;padding-left:3px;width:1375px}
.bar-draw .sep~.sep~.tool{margin-right:1px}
.grip{width:3px;height:24px;margin-right:3px;background:repeating-linear-gradient(#bbb 0 3px,transparent 3px 7px)}
.tool{display:flex;align-items:center;gap:6px;height:34px;padding:0 4px 2px;border:1px solid transparent;flex:none}
.tool-cut{margin-left:-8px;padding-right:5px}
.tool:disabled{color:#8a8a8a}
.tool:disabled .ico{fill:none;stroke:#b4b4b4;stroke-width:1.500}
.tool.on{background:#deebf6;border:2px solid #2f8ade;padding:0 3px 1px}
.tool.on.strong{background:#b1d6f2}
.ico{width:24px;height:24px;flex:none}
.ico20{width:20px;height:20px;display:block}
.ico24{width:24px;height:20px;display:block}
.ico16{width:16px;height:16px;display:block}
.caret{width:8px;height:5px;background:currentColor;clip-path:polygon(0 0,100% 0,50% 100%);margin:0 2px 0 3px;flex:none}
.caret.tight{margin:0 0 0 -1px}
.caret.bare{margin:0;display:block}
.drop{width:19px;height:34px;display:flex;align-items:center;justify-content:center}
.sep{width:1px;height:22px;background:#bdbdbd;margin:0 4px;flex:none}
.more{align-self:flex-start;width:12px;margin:6px 6px 0 auto}
.more svg{display:block;width:12px;height:10px}
.viewcombo{width:92px;gap:3px;background:#fff;margin-right:3px}
.viewcombo .caret{margin-left:auto;margin-right:3px}
.combos{display:flex;gap:3px;margin:0 3px 0 2px}
.combo{position:relative;display:block;width:105px;height:36px;background:#fff;border-right:17px solid #fafafa}
.combo-s{width:86px}
.combo select{appearance:none;width:100%;height:100%;border:0;background:transparent;padding:0 0 2px 4px;white-space:nowrap;overflow:visible;opacity:1}
.combo::after{content:"";position:absolute;right:-13px;top:16px;width:8px;height:5px;background:#111;clip-path:polygon(0 0,100% 0,50% 100%)}
.combo-line{width:82px;height:34px;border:2px solid #999;background:#f4f4f4;margin:0 2px}
.combo-line::after{right:4px;top:14px;background:#777}
.barrow-snap{margin:3px 0 8px 2px}
.bar-snap1{padding:0 3px}
.bar-snap2{padding:0 3px;margin-left:1px}
.bar-offset{padding:0 3px}
.bar-offset .combo{margin:0 2px 0 1px}
.dim{color:#8a8a8a;margin:0 3px}
.dim-y{margin-left:7px}
.bar-offset .sep~.dim:first-of-type{margin-left:0}
.spin{display:flex;align-items:center;width:86px;height:34px;border:2px solid #999;background:#f5f5f5}
.spin-wide{width:102px;margin-left:7px}
.spin input{flex:1;min-width:0;width:20px;border:0;padding:0 12px 2px 0;text-align:right;background:transparent;color:#8a8a8a}
.spin-wide input{padding-right:10px}
.ud{width:8px;height:24px;margin-right:6px;background:#777;clip-path:polygon(50% 0,100% 20%,0 20%,50% 0,50% 100%,0 80%,100% 80%,50% 100%)}
input[type=checkbox]{appearance:none;width:17px;height:17px;border:2px solid #999;background:#fff;flex:none}
.rot{display:flex;align-items:center;gap:13px}
.rot input{background:#f5f5f5}

/* left panels */
.side{position:relative;width:198px;flex:none;display:flex;flex-direction:column;overflow:hidden;white-space:nowrap}
.plain{display:flex;align-items:center;flex:none}
.ptitle{display:flex;align-items:center;height:22px;margin:1px 0 0;border:1px solid #777;border-left:0;line-height:20px;flex:none}
.ptitle span{flex:1;height:20px}
.ptitle .cut{margin-left:-11px}
.ptitle .behind{padding-left:26px}
.pin{width:11px;height:14px;margin-right:16px}
.x{width:12px;height:12px;margin-right:7px}
.sidebar-tools{display:flex;align-items:center;gap:11px;height:40px;margin:3px 2px 0 0;padding:0 0 4px 5px;background:linear-gradient(#fdfdfd,#f1f1f1);flex:none}
.sidebar-tools .plain{gap:6px}
.search{display:flex;align-items:center;gap:8px;height:36px;margin-top:2px;flex:none}
.sinput{width:161px;height:36px;border:2px solid #888;border-left:0;padding:0 0 6px;text-indent:-9px;background:#fff}
.sinput::placeholder{color:#888;opacity:1}
.treebox{display:flex;height:176px;margin:2px 0 0;border:2px solid #8d939b;border-left:0;background:#fff;flex:none}
.tree{flex:1;min-width:0;list-style:none;margin:0;padding:0;overflow:hidden;font:15px/24px "DejaVu Sans Mono","Noto Sans CJK SC",monospace}
.tree li{display:flex;align-items:center;height:24px;padding-left:34px}
.tree .root{padding-left:5px;font-size:18px;gap:9px}
.rooticon{width:20px;height:20px;flex:none}
.gear{width:18px;height:18px;flex:none;margin-right:12px}
.tree .sel{background:#316ac5;width:142px}
.vscroll{display:flex;flex-direction:column;align-items:center;width:22px;background:#f0f0f0;padding:10px 0;margin-right:2px;flex:none}
.chev{width:12px;height:8px;flex:none}
.thumb{width:22px;background:#cdcdcd;margin-top:8px}
.thumb-tree{height:94px;margin-bottom:auto}
.thumb-sheet{height:25px;margin-bottom:auto}
.ptitle-mgr{margin-top:10px}
.tabs{display:flex;height:31px;margin-top:2px;flex:none}
.tab{height:31px;overflow:hidden;text-align:left}
.tab-on{width:99px;padding-left:34px;background:#fcfcfc}
.tab-off{width:50px;padding-left:6px;border-top:1px solid #ccc}
.tabarrow{width:24px;height:24px;margin-top:2px;border:1px solid #aaa;display:flex;align-items:center;justify-content:center}
.tabarrow svg{width:6px;height:8px}
.sheettools{display:flex;height:36px;margin-top:5px;background:#fff;flex:none}
.flat{height:34px;border:1px solid #999;background:#f1f1f1;display:flex;align-items:center;justify-content:center}
.flat-first{width:61px;justify-content:flex-end;padding-right:6px}
.flat-drop{width:19px}
.flat-wide{width:87px}
.flat-more{width:18px;margin-left:7px;align-items:flex-start;padding-top:5px}
.flat-more svg{width:12px;height:10px}
.sheets{display:flex;flex-direction:column;height:139px;margin:0 6px 0 0;border:2px solid #9a9aa0;border-left:0;padding-top:3px;background:#f0f0f0;flex:none}
.sheetrow{display:flex;height:106px;overflow:hidden}
.sheetlist{flex:1;min-width:0;margin-right:1px;overflow:hidden;background:#fff}
.sh{display:flex;align-items:center;height:29px;margin-left:9px;padding-left:4px;border-left:1px solid #bbb;border-bottom:1px solid #bbb;overflow:hidden}
.sh-head{height:38px;justify-content:flex-end;padding-right:8px;background:linear-gradient(#f7d79c,#f0c060);color:#7a1050}
.sh-group{font:16px/24px "Noto Sans CJK SC",sans-serif;gap:8px}
.minus{width:19px;height:19px;border:1px solid #aaa;background:linear-gradient(#444,#444) center/11px 2px no-repeat #fff}
.sh-yellow{background:#ff0;font-family:"Noto Sans CJK SC",sans-serif;padding-left:12px}
.sh-part{align-items:flex-start}
.branch{width:24px;height:1px;background:#999;margin-right:8px;flex:none}
.hscroll{display:flex;align-items:center;justify-content:space-between;height:24px;padding:0 34px 0 4px}
.hthumb{width:26px;height:23px;background:#cdcdcd}
.chevr{width:8px;height:12px}
.ptitle-layer{margin-top:15px}
.layers{flex:1;margin-top:2px;border:2px solid #a0a4aa;border-left:0;border-bottom:0;background:#fff;padding:0 0 0 7px}
.layers label{display:flex;align-items:center;gap:4px;height:21px;line-height:21px}
.layers b{font:15px/21px "DejaVu Sans Mono",monospace}
.layers input{display:grid;place-items:center;width:19px;height:17px;border-color:#555}
.layers input:checked::after{content:"";width:13px;height:7px;border:solid #444;border-width:0 0 2px 2px;transform:rotate(-45deg);margin-bottom:4px}
.floatwin{position:absolute;left:0;top:116px;width:34px;height:268px;background:#fff;border:solid #888;border-width:1px 2px 2px 0}
.floatinner{margin-top:47px;height:218px;border-top:2px solid #8d939b}

/* drawing area */
.main{flex:1;min-width:0;display:flex;flex-direction:column}
.canvas{display:block;flex:1;min-height:0;width:100%}
.cad-cyan{fill:#00c0c0;font-family:"Liberation Sans",sans-serif;font-size:16px}
.cad-cyan .narrow{font-size:15px}
.cad-gray{fill:#c8c8c8;font-family:"Liberation Sans","Noto Sans CJK SC",sans-serif}

/* bar editor */
.editor{display:flex;height:281px;flex:none;overflow:hidden}
.strip{width:18px;flex:none;display:flex;flex-direction:column;padding-left:1px}
.dots{flex:1;width:11px;margin:6px 0 0 2px;background:radial-gradient(circle at 2px 2px,#b0b0b0 1px,transparent 2px) 0 0/6px 8px}
.edmain{flex:1;min-width:0;display:flex;flex-direction:column}
.bar-nav{height:39px}
.nav{width:35px;height:34px;padding-bottom:2px;display:flex;align-items:center;justify-content:center}
.tool-close{margin:0 4px}
.total{margin-left:4px;padding-bottom:2px}
.gridwrap{flex:1;min-height:0;overflow:hidden;background:#fff;border:solid #b5b5bb;border-width:2px 0 0 2px;padding-left:1px}
.grid{border-collapse:separate;border-spacing:0;table-layout:fixed;width:1313px;font:15px/20px "DejaVu Sans Mono",monospace}
.c0{width:48px}.c1{width:110px}.c2{width:234px}.c3{width:91px}.c4{width:191px}.c5{width:58px}.c6{width:74px}.c7{width:91px}.c8{width:92px}.c9{width:106px}.c10{width:111px}.c11{width:107px}
.grid th,.grid td{border:solid #bdbdbd;border-width:0 1px 1px 0;padding:0 3px;height:43px;white-space:nowrap;overflow:hidden}
.grid th{font-weight:400;background:linear-gradient(#fff,#f2f2f2);padding:0 12px 0 0}
.grid thead th{height:30px;padding:0 0 2px;font-family:"Noto Sans CJK SC",sans-serif;font-size:18px}
.grid thead b{font:15px "DejaVu Sans Mono",monospace}
.grid thead .hot{background:linear-gradient(#f7d79c,#f0c060);color:#7a1050}
.grid td{background:#ccffd9}
.grid tbody td:nth-child(2){border-right:2px solid #111;padding-left:4px}
.grid .z{font-family:"Noto Sans CJK SC",sans-serif;font-size:18px;padding-bottom:2px}
.grid .act{background:#adead9}
.grid tbody .cur{background:#ffd48c;color:#7a1050;padding:0 3px 0 0}
.gridscroll{display:flex;align-items:center;height:10px;padding:1px 11px 0 12px;background:#f0f0f0;overflow:hidden;flex:none;justify-content:space-between}
.gl{width:8px;height:12px;margin-top:8px}
.gridscroll i{width:736px;height:9px;background:#cdcdcd}

/* things floating over the window */
.widget{position:absolute;left:1290px;top:-58px;width:180px;height:71px}
.pill{position:absolute;left:34px;top:20px;width:148px;height:49px;border-radius:25px;background:#dcdcdc;border:1px solid #f8f8f8;box-shadow:0 1px 4px #0007}
.ball{position:absolute;left:0;top:1px;width:70px;height:70px;border-radius:50%;background:#3fc860;border:3px solid #eee;box-shadow:0 1px 4px #0007}
.watermark{position:absolute;left:1254px;top:841px;color:#8e8e8eaa;white-space:nowrap}
.wm1{font-size:31px;line-height:40px}
.wm2{font-size:22px;line-height:30px}
```
